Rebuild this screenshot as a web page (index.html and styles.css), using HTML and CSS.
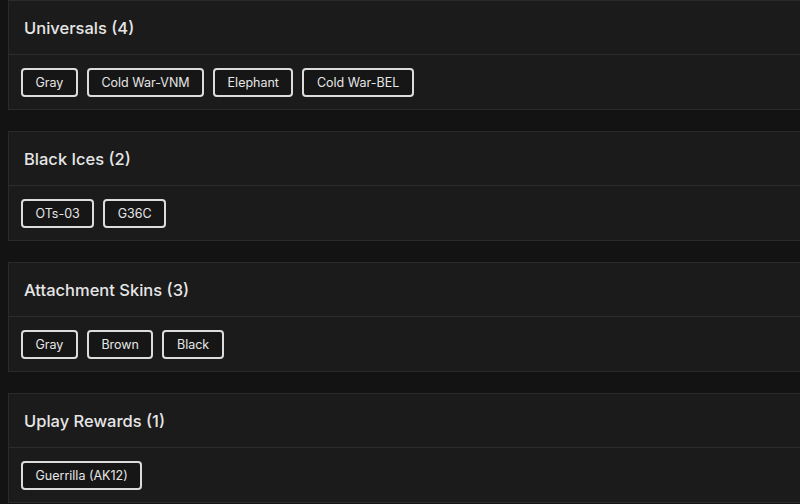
FILE: index.html
```html
<!DOCTYPE html>
<html>
<head>
<meta charset="utf-8">
<link rel="stylesheet" href="styles.css">
</head>
<body>
<div class="list">
  <section class="card first">
    <div class="card-head">Universals (4)</div>
    <div class="card-body">
      <span class="tag">Gray</span>
      <span class="tag">Cold War-VNM</span>
      <span class="tag">Elephant</span>
      <span class="tag">Cold War-BEL</span>
    </div>
  </section>
  <section class="card">
    <div class="card-head">Black Ices (2)</div>
    <div class="card-body">
      <span class="tag">OTs-03</span>
      <span class="tag">G36C</span>
    </div>
  </section>
  <section class="card">
    <div class="card-head">Attachment Skins (3)</div>
    <div class="card-body">
      <span class="tag">Gray</span>
      <span class="tag">Brown</span>
      <span class="tag">Black</span>
    </div>
  </section>
  <section class="card">
    <div class="card-head">Uplay Rewards (1)</div>
    <div class="card-body">
      <span class="tag">Guerrilla (AK12)</span>
    </div>
  </section>
</div>
</body>
</html>
```
FILE: styles.css
```css
html, body {
  margin: 0;
  padding: 0;
  background: #131313;
  overflow: hidden;
}
body {
  font-family: Inter, "Noto Sans", sans-serif;
  color: #e4e4e4;
}
.list {
  display: flex;
  flex-direction: column;
  gap: 21px;
  padding: 0 0 0 8px;
}
.card {
  background: #1b1b1b;
  border: 1px solid #2a2a2a;
  border-right: none;
  margin-right: -20px;
}
.card-head {
  height: 53px;
  display: flex;
  align-items: center;
  padding-left: 15px;
  font-size: 16.5px;
  font-weight: 500;
  border-bottom: 1px solid #2c2c2c;
  color: #e6e6e6;
}
.card-body {
  display: flex;
  gap: 9px;
  padding: 13px 12px 12px;
}
.tag {
  box-sizing: border-box;
  display: inline-flex;
  align-items: center;
  height: 29px;
  padding: 0 12.5px;
  border: 2px solid #dcdcdc;
  border-radius: 4px;
  background: #161616;
  font-size: 12.5px;
  color: #e6e6e6;
}
```
